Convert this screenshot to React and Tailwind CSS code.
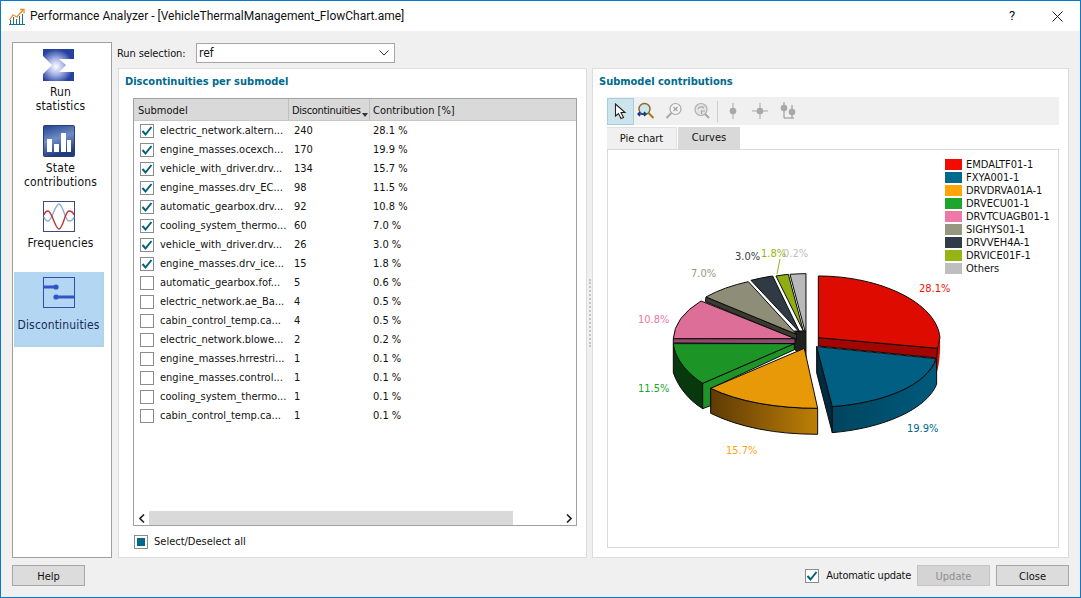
import React from "react";

const rows = [
  ["electric_network.altern...", "240", "28.1 %", true],
  ["engine_masses.ocexch...", "170", "19.9 %", true],
  ["vehicle_with_driver.drv...", "134", "15.7 %", true],
  ["engine_masses.drv_EC...", "98", "11.5 %", true],
  ["automatic_gearbox.drv...", "92", "10.8 %", true],
  ["cooling_system_thermo...", "60", "7.0 %", true],
  ["vehicle_with_driver.drv...", "26", "3.0 %", true],
  ["engine_masses.drv_ice...", "15", "1.8 %", true],
  ["automatic_gearbox.fof...", "5", "0.6 %", false],
  ["electric_network.ae_Ba...", "4", "0.5 %", false],
  ["cabin_control_temp.ca...", "4", "0.5 %", false],
  ["electric_network.blowe...", "2", "0.2 %", false],
  ["engine_masses.hrrestri...", "1", "0.1 %", false],
  ["engine_masses.control...", "1", "0.1 %", false],
  ["cooling_system_thermo...", "1", "0.1 %", false],
  ["cabin_control_temp.ca...", "1", "0.1 %", false],
];

const legend = [
  ["#f20c00", "EMDALTF01-1"],
  ["#006a8e", "FXYA001-1"],
  ["#ffa50a", "DRVDRVA01A-1"],
  ["#1ea52c", "DRVECU01-1"],
  ["#ee78a6", "DRVTCUAGB01-1"],
  ["#97977f", "SIGHYS01-1"],
  ["#323c46", "DRVVEH4A-1"],
  ["#96b414", "DRVICE01F-1"],
  ["#bebebe", "Others"],
];

const FONT = "font-['DejaVu_Sans_Condensed','Liberation_Sans',sans-serif]";

function Check({ checked }) {
  return (
    <span className="w-[14px] h-[14px] shrink-0 border border-[#8c8c8c] bg-white flex items-center justify-center">
      {checked && (
        <svg width="12" height="12" viewBox="0 0 12 12">
          <path d="M1.5 6 L4.5 9.5 L10.5 2" fill="none" stroke="#00627f" strokeWidth="2" />
        </svg>
      )}
    </span>
  );
}

function Btn({ children, disabled, w = "w-[73px]" }) {
  return (
    <div className={`${w} h-[21px] flex items-center justify-center pt-[2px] border ${disabled ? "border-[#c4c4c4] bg-[#d4d4d4] text-[#8e8e8e]" : "border-[#a6a6a6] bg-[#dcdcdc] text-[#111]"}`}>
      {children}
    </div>
  );
}

function SigmaIcon() {
  return (
    <svg width="32" height="32" viewBox="0 0 32 32">
      <defs>
        <radialGradient id="sg" cx="0.42" cy="0.55" r="0.55">
          <stop offset="0" stopColor="#ffffff" />
          <stop offset="0.45" stopColor="#a9b6e6" />
          <stop offset="1" stopColor="#26409f" />
        </radialGradient>
      </defs>
      <path d="M0 0 H31 V10 H16 L23 16 L16 23 H31 V32 H0 V25 L9 16 L0 7 Z" fill="url(#sg)" />
    </svg>
  );
}

function StateIcon() {
  return (
    <svg width="32" height="32" viewBox="0 0 32 32">
      <defs>
        <linearGradient id="st" x1="0" y1="0" x2="0.3" y2="1">
          <stop offset="0" stopColor="#1f3f8f" />
          <stop offset="0.5" stopColor="#6f8ec4" />
          <stop offset="1" stopColor="#1f3a80" />
        </linearGradient>
      </defs>
      <rect x="0.5" y="0.5" width="31" height="31" rx="1" fill="url(#st)" stroke="#2a3c78" />
      <rect x="4" y="14" width="5" height="13" fill="#fff" />
      <rect x="11" y="19" width="5" height="8" fill="#fff" />
      <rect x="18" y="8" width="5" height="19" fill="#fff" />
      <rect x="24" y="15" width="4" height="12" fill="#fff" />
    </svg>
  );
}

function FreqIcon() {
  return (
    <svg width="32" height="31" viewBox="0 0 32 31">
      <rect x="0.5" y="0.5" width="31" height="30" fill="#fff" stroke="#3c4a80" />
      <path d="M1 16 C2 19 3.5 20 5 20 C9 20 12 3 16 3 C20 3 22 20 26 20 C28 20 30 19 31 16" fill="none" stroke="#8eaad8" strokeWidth="1.4" />
      <path d="M1 14 C2 11 3.5 10 5 10 C9 10 12 28 16 28 C20 28 22 10 26 10 C28 10 30 11 31 14" fill="none" stroke="#c0343c" strokeWidth="1.4" />
    </svg>
  );
}

function DiscIcon() {
  return (
    <svg width="32" height="31" viewBox="0 0 32 31">
      <rect x="0.5" y="0.5" width="31" height="30" fill="none" stroke="#2f4fa8" />
      <path d="M1 10 H13" stroke="#2f55c8" strokeWidth="3" />
      <circle cx="13" cy="10" r="2.6" fill="#2f55c8" />
      <path d="M13 20 H31" stroke="#2f55c8" strokeWidth="3" />
      <circle cx="13" cy="20" r="2.6" fill="#2f55c8" />
    </svg>
  );
}

function AppIcon() {
  return (
    <svg width="17" height="17" viewBox="0 0 17 17">
      <path d="M0.5 12 L4 7 L8 9 L14 2" fill="none" stroke="#ee8a2a" strokeWidth="1.3" />
      <path d="M11 1.5 H15 V5.5" fill="none" stroke="#ee8a2a" strokeWidth="1.3" />
      <path d="M1.5 12 V16 M4.5 9 V16 M7.5 11 V16 M10.5 8 V16 M13.5 6 V16 M0 16.5 H16" stroke="#1b6f90" strokeWidth="1" fill="none" />
    </svg>
  );
}

function Toolbar() {
  return (
    <div className="h-[28px] bg-[#f0f0f0] flex items-center">
      <div className="w-[27px] h-[27px] bg-[#cde4ec] border border-[#a5cfdc] flex items-center justify-center">
        <svg width="14" height="17" viewBox="0 0 14 17">
          <path d="M1.5 1 V13 L4.5 10.5 L7 15.5 L9.5 14.5 L7 9.5 H11 Z" fill="#fff" stroke="#222" strokeWidth="1.1" />
        </svg>
      </div>
      <div className="w-[23px] h-[20px] flex items-center justify-center">
        <svg width="18" height="18" viewBox="0 0 18 18">
          <circle cx="7.5" cy="7" r="5.5" fill="#cfe5f2" stroke="#8a6a20" strokeWidth="1.4" />
          <path d="M11.5 11 L16.5 16" stroke="#a87a10" strokeWidth="2" />
          <path d="M1 12 H9 M3 10 L1 12 L3 14 M7 10 L9 12 L7 14" stroke="#103a8a" strokeWidth="1.5" fill="none" />
        </svg>
      </div>
      <div className="w-[28px] ml-[3px] h-[20px] flex items-center justify-center">
        <svg width="18" height="18" viewBox="0 0 18 18">
          <circle cx="10.5" cy="7" r="5.5" fill="#f4f4f4" stroke="#a8a8a8" strokeWidth="1.2" />
          <path d="M8.5 5 L12.5 9 M12.5 5 L8.5 9" stroke="#a0a0a0" strokeWidth="1.2" />
          <path d="M6.5 11 L1.5 16" stroke="#a8a8a8" strokeWidth="2" />
        </svg>
      </div>
      <div className="w-[27px] h-[20px] flex items-center justify-center">
        <svg width="18" height="18" viewBox="0 0 18 18">
          <circle cx="8" cy="7.5" r="6" fill="#e4e4e4" stroke="#b0b0b0" strokeWidth="1.2" />
          <path d="M5 7 A3.5 3 0 0 1 11 6 M12 9 L8.5 9 V12" stroke="#a4a4a4" strokeWidth="1.2" fill="none" />
          <path d="M12 12 L16 16" stroke="#a8a8a8" strokeWidth="2" />
        </svg>
      </div>
      <div className="w-px h-[21px] bg-[#cfcfcf] ml-[2px]" />
      <div className="w-[16px] h-[20px] ml-[7px] flex items-center justify-center">
        <svg width="8" height="16" viewBox="0 0 8 16">
          <path d="M4 0 V16" stroke="#a8a8a8" />
          <circle cx="4" cy="8" r="3.3" fill="#a8a8a8" />
        </svg>
      </div>
      <div className="w-[16px] h-[20px] ml-[11px] flex items-center justify-center">
        <svg width="16" height="16" viewBox="0 0 16 16">
          <path d="M8 0 V16 M0 8 H16" stroke="#a8a8a8" />
          <circle cx="8" cy="8" r="3.3" fill="#a8a8a8" />
        </svg>
      </div>
      <div className="w-[16px] h-[20px] ml-[12px] flex items-center justify-center">
        <svg width="16" height="18" viewBox="0 0 16 18">
          <path d="M4 0 V16 H14 M12 3 V16" stroke="#8e8e8e" fill="none" />
          <circle cx="4" cy="6" r="3.3" fill="#a8a8a8" />
          <circle cx="12" cy="10" r="3.3" fill="#a8a8a8" />
        </svg>
      </div>
    </div>
  );
}

function Pie() {
  const L = "#0a0a0a";
  return (
    <svg width="449" height="399" viewBox="0 0 449 399" className="absolute left-0 top-0">
      <defs>
        <linearGradient id="og" x1="0" y1="0" x2="1" y2="0">
          <stop offset="0" stopColor="#5f3a05" />
          <stop offset="1" stopColor="#bd7f06" />
        </linearGradient>
        <linearGradient id="bg2" x1="0" y1="0" x2="1" y2="0">
          <stop offset="0" stopColor="#00455f" />
          <stop offset="1" stopColor="#005a7c" />
        </linearGradient>
      </defs>
      <g transform="translate(12 81) scale(0.3333)" stroke={L} strokeWidth="3" strokeLinejoin="round">
        <path d="M523 300 H558 V382 L523 355 Z" fill="#20201c" />
        <path d="M555 300 L510 130 A365 185 0 0 1 558 128 V300 Z" fill="#b9b9b9" />
        <path d="M550 300 L468 135 A365 185 0 0 1 505 130 Z" fill="#90ae14" />
        <path d="M540 305 L393 148 A365 185 0 0 1 458 135 Z" fill="#2f3a44" />
        <path d="M258 198 L256 212 L530 326 L530 310 Z" fill="#3b3a30" />
        <path d="M530 310 L258 198 A365 185 0 0 1 385 152 Z" fill="#8d8d78" />
        <path d="M160 323 L160 336 L525 338 V323 Z" fill="#8e4b6d" />
        <path d="M525 323 L160 323 A365 185 0 0 1 243 210 Z" fill="#dd6e98" />
        <path d="M160 338 V425 C175 470 210 510 248 533 V457 Z" fill="#07380e" />
        <path d="M248 457 V533 L272 524 V472 L523 356 V338 Z" fill="#1c9526" />
        <path d="M523 338 L160 338 C165 385 205 430 248 457 Z" fill="#1c9526" />
        <path d="M272 472 V547 C360 590 470 610 593 610 V532 C470 532 355 512 272 472 Z" fill="url(#og)" />
        <path d="M553 352 L593 532 C470 532 355 512 272 472 Z" fill="#e89908" />
        <path d="M950 352 L960 322 C962 360 958 405 948 432 Z" fill="#d80c00" stroke="none" />
        <path d="M595 320 V345 L950 381 L953 352 Z" fill="#a30500" />
        <path d="M595 320 V135 C780 135 950 215 960 320 L953 352 Z" fill="#de0c00" />
        <path d="M590 347 V425 L637 605 V527 Z" fill="#012c40" />
        <path d="M637 527 V605 C790 592 920 535 950 460 V383 C920 465 790 515 637 527 Z" fill="url(#bg2)" />
        <path d="M590 347 L948 383 C920 465 790 515 637 527 Z" fill="#005f82" />
      </g>
      <g fontSize="11">
        <text x="311" y="142" fill="#f01000">28.1%</text>
        <text x="299" y="282" fill="#006a8e">19.9%</text>
        <text x="118" y="304" fill="#ffa510">15.7%</text>
        <text x="30" y="242" fill="#1ea52c">11.5%</text>
        <text x="30" y="173" fill="#ee78a6">10.8%</text>
        <text x="83" y="127" fill="#97977f">7.0%</text>
        <text x="127" y="110" fill="#323c46">3.0%</text>
        <text x="175" y="107" fill="#bebebe">0.2%</text>
        <text x="153" y="107" fill="#96b414">1.8%</text>
        <path d="M172 109 L169 124" stroke="#96b414" fill="none" />
      </g>
    </svg>
  );
}

export default function App() {
  return (
    <div className={`${FONT} text-[11px] leading-[14px] text-[#111] w-[1081px] h-[598px] flex flex-col bg-[#f0f0f0] border border-[#0a78cf] overflow-hidden`}>
      {/* title bar */}
      <div className="h-[30px] bg-white flex items-center shrink-0 pl-[8px] font-['Roboto',sans-serif] text-[12px]">
        <AppIcon />
        <span className="ml-[4px]">Performance Analyzer - [VehicleThermalManagement_FlowChart.ame]</span>
        <span className="ml-auto w-[16px] text-center mr-[32px] text-[13px]">?</span>
        <svg width="11" height="11" viewBox="0 0 11 11" className="mr-[17px]">
          <path d="M0.5 0.5 L10.5 10.5 M10.5 0.5 L0.5 10.5" stroke="#222" strokeWidth="1" />
        </svg>
      </div>

      {/* main */}
      <div className="flex-1 flex flex-col px-[11px] pt-[11px] pb-[11px] min-h-0">
        <div className="flex-1 flex gap-[6px] min-h-0">
          {/* sidebar */}
          <div className="w-[100px] bg-white border border-[#a0a0a0] flex flex-col items-center shrink-0 pt-[6px] text-[12px] leading-[14px] tracking-[0.15px] pl-[1px] pr-[8px]">
            <SigmaIcon />
            <div className="text-center mt-[4px] h-[28px] ml-[4px]">Run<br />statistics</div>
            <div className="mt-[12px]"><StateIcon /></div>
            <div className="text-center mt-[4px] h-[28px] ml-[4px]">State<br />contributions</div>
            <div className="mt-[12px]"><FreqIcon /></div>
            <div className="text-center mt-[4px] h-[14px] ml-[4px]">Frequencies</div>
            <div className="mt-[22px] w-[90px] h-[75px] bg-[#b3d7f2] border-b-[2px] border-x-[2px] border-[#afd6e6] flex flex-col items-center pt-[5px]">
              <DiscIcon />
              <div className="mt-[10px] text-[#1a2a5c]">Discontinuities</div>
            </div>
          </div>

          {/* right column */}
          <div className="flex-1 flex flex-col min-w-0">
            <div className="h-[20px] flex items-center shrink-0 mt-[1px]">
              <span className="w-[78px] -ml-px pt-[2px] tracking-[-0.1px]">Run selection:</span>
              <div className="w-[199px] ml-px h-[20px] border border-[#a6a6a6] bg-white flex items-center pl-[2px] pr-[5px] justify-between">
                <span className="text-[12px]">ref</span>
                <svg width="10" height="6" viewBox="0 0 10 6"><path d="M0.5 0.5 L5 5 L9.5 0.5" fill="none" stroke="#333" /></svg>
              </div>
            </div>

            <div className="flex-1 flex mt-[5px] min-h-0">
              {/* left panel */}
              <div className="w-[469px] bg-white border border-[#dcdcdc] flex flex-col pl-[6px] pr-[9px] shrink-0">
                <div className="font-bold text-[#006a8e] mt-[6px] h-[13px]">Discontinuities per submodel</div>
                <div className="ml-[8px] mt-[10px] w-[444px] h-[428px] border border-[#a0a0a0] flex flex-col shrink-0">
                  <div className="h-[22px] bg-[#d9d9d9] flex items-center shrink-0 border-b border-[#c8c8c8]">
                    <div className="w-[155px] h-full flex items-center pl-[4px] pt-[2px] border-r border-[#c0c0c0]">Submodel</div>
                    <div className="w-[81px] h-full flex items-center pl-[3px] pt-[2px] border-r border-[#c0c0c0] relative tracking-[-0.3px]">
                      Discontinuities
                      <svg width="6" height="4" viewBox="0 0 6 4" className="absolute right-[1px] bottom-[3px]"><path d="M0 0 H6 L3 4 Z" fill="#333" /></svg>
                    </div>
                    <div className="pl-[3px] pt-[2px]">Contribution [%]</div>
                  </div>
                  <div className="flex-1">
                    {rows.map((r, i) => (
                      <div key={i} className="h-[19px] flex items-center">
                        <div className="w-[155px] pl-[6px] flex items-center">
                          <Check checked={r[3]} />
                          <span className="ml-[6px] whitespace-nowrap">{r[0]}</span>
                        </div>
                        <div className="w-[79px] pl-[5px]">{r[1]}</div>
                        <div className="pl-[5px]">{r[2]}</div>
                      </div>
                    ))}
                  </div>
                  <div className="h-[14px] flex items-center shrink-0">
                    <div className="w-[15px] flex justify-center">
                      <svg width="6" height="9" viewBox="0 0 6 9"><path d="M5 0.5 L1 4.5 L5 8.5" fill="none" stroke="#222" strokeWidth="1.6" /></svg>
                    </div>
                    <div className="w-[364px] h-full bg-[#d9d9d9]" />
                    <div className="flex-1 flex justify-end pr-[4px]">
                      <svg width="6" height="9" viewBox="0 0 6 9"><path d="M1 0.5 L5 4.5 L1 8.5" fill="none" stroke="#222" strokeWidth="1.6" /></svg>
                    </div>
                  </div>
                </div>
                <div className="ml-[9px] mt-[9px] flex items-center">
                  <span className="w-[14px] h-[14px] border border-[#8c8c8c] bg-white flex items-center justify-center"><span className="w-[8px] h-[8px] bg-[#00688c]" /></span>
                  <span className="ml-[6px]">Select/Deselect all</span>
                </div>
              </div>

              {/* splitter */}
              <div className="w-[5px] shrink-0 flex items-center justify-center">
                <div className="w-[2px] h-[68px] border-l-2 border-dotted border-[#c4c4c4]" />
              </div>

              {/* right panel */}
              <div className="flex-1 bg-white border border-[#dcdcdc] flex flex-col pl-[6px] pr-[9px] min-w-0">
                <div className="font-bold text-[#006a8e] mt-[6px] h-[13px]">Submodel contributions</div>
                <div className="ml-[8px] mt-[9px] w-[452px] flex flex-col flex-1 mb-[9px]">
                  <Toolbar />
                  <div className="flex h-[22px] mt-[2px] shrink-0">
                    <div className="w-[70px] bg-[#f0f0f0] border-t border-r border-[#e0e0e0] flex items-center justify-center">Pie chart</div>
                    <div className="w-[62px] ml-px bg-[#d9d9d9] flex items-center justify-center">Curves</div>
                  </div>
                  <div className="relative flex-1 border border-[#d9d9d9] bg-white">
                    <Pie />
                    <div className="absolute left-[337px] top-[8px] flex flex-col">
                      {legend.map(([c, t]) => (
                        <div key={t} className="h-[13px] flex items-center">
                          <span className="w-[17px] h-[11px]" style={{ background: c }} />
                          <span className="ml-[4px] whitespace-nowrap pt-px">{t}</span>
                        </div>
                      ))}
                    </div>
                  </div>
                </div>
              </div>
            </div>
          </div>
        </div>

        {/* footer */}
        <div className="h-[21px] mt-[7px] flex items-center shrink-0">
          <Btn>Help</Btn>
          <div className="ml-auto flex items-center">
            <Check checked />
            <span className="ml-[7px] mr-[6px] pt-px tracking-[-0.25px]">Automatic update</span>
            <Btn disabled>Update</Btn>
            <div className="w-[6px]" />
            <Btn>Close</Btn>
          </div>
        </div>
      </div>
    </div>
  );
}
